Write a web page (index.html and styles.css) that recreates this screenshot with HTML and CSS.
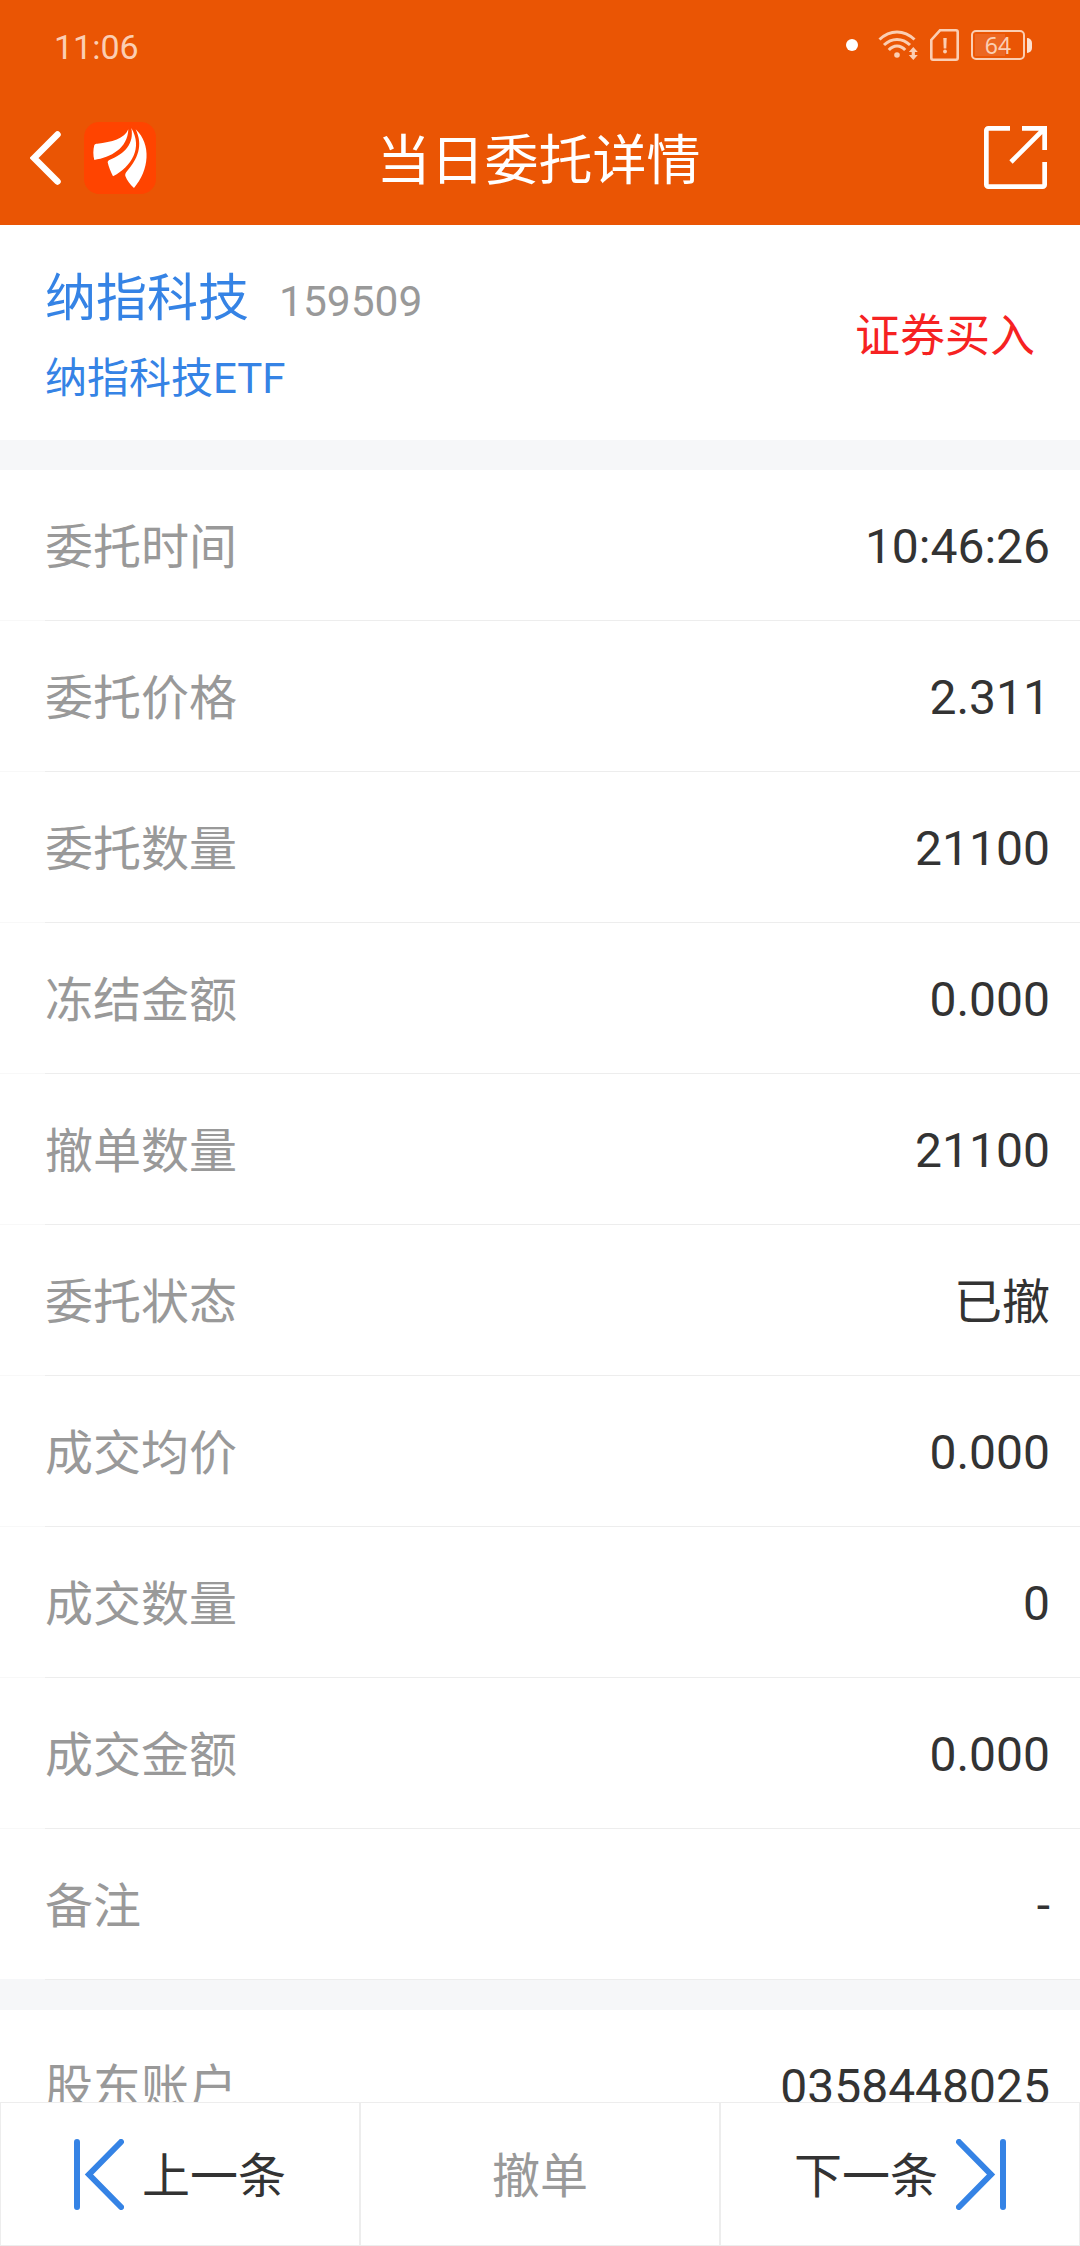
FILE: index.html
```html
<!DOCTYPE html>
<html lang="zh-CN">

<head>
    <meta charset="UTF-8">
    <meta name="viewport" content="width=device-width, initial-scale=1.0">
    <title>当日委托详情</title>
    <link rel="stylesheet" href="styles.css">
</head>

<body>
    <!-- Header section -->
    <header>
        <div class="status-bar">
            <span class="clock">11:06</span>
            <div class="status-icons">
                <span class="dot"></span>
                <svg class="wifi" width="40" height="32" viewBox="0 0 40 32" fill="none" stroke="#fbceb3" stroke-width="3">
                    <path d="M1.5 10.5C12 .4 26 .4 36.500 10.500M6 16C13.500 8.500 24.500 8.500 32 16M10.800 21C15.500 15.500 22.500 15.500 27.200 21" />
                    <circle cx="19" cy="26" r="2.800" fill="#fbceb3" stroke="none" />
                    <path d="M35.300 18l4.500 5h-2.900v3h2.900l-4.500 5-4.500-5h2.900v-3h-2.900z" fill="#fbceb3" stroke="none" />
                </svg>
                <svg class="sim" width="29" height="32" viewBox="0 0 29 32" fill="none" stroke="#fbceb3" stroke-width="2.600">
                    <path d="M10 1.300H26a1.700 1.700 0 0 1 1.700 1.700V29a1.700 1.700 0 0 1-1.700 1.700H3A1.700 1.700 0 0 1 1.300 29V11z" />
                    <path d="M13.300 9h3.400l-.4 10.500h-2.600z" fill="#fbceb3" stroke="none" />
                    <circle cx="15" cy="22.500" r="1.900" fill="#fbceb3" stroke="none" />
                </svg>
                <div class="battery"><span class="battery-level">64</span></div>
            </div>
        </div>
        <div class="title-bar">
            <div class="title-left">
                <svg class="back" width="32" height="54" viewBox="0 0 32 54" fill="none" stroke="#fff" stroke-width="6.500" stroke-linecap="round">
                    <path d="M27.500 3.500L4 27l23.500 23.500" />
                </svg>
                <svg class="logo" width="72" height="72" viewBox="0 0 216 216">
                    <rect width="216" height="216" rx="46" fill="#ff4400" />
                    <g fill="#fff">
                        <path d="M133 22C131 80 80 106 31 114C27 100 27 84 31 69C33 66 36 65 40 65C83 61 122 50 133 22Z" />
                        <path d="M142 18C177 78 143 134 87 163C80 149 74 135 71 121C71 118 73 116 76 114C123 95 151 65 142 18Z" />
                        <path d="M155 22C203 67 196 145 150 198C138 187 129 175 124 162C123 158 124 154 127 150C162 111 178 70 155 22Z" />
                    </g>
                </svg>
            </div>
            <h1>当日委托详情</h1>
            <svg class="share" width="63" height="63" viewBox="0 0 63 63" fill="none" stroke="#fff" stroke-width="4.700">
                <path d="M26 2.350H4.350a2 2 0 0 0-2 2V58.650a2 2 0 0 0 2 2H58.650a2 2 0 0 0 2-2V36M38 2.350H60.650V24M59 4L27 36" />
            </svg>
        </div>
    </header>

    <main>
        <!-- Stock summary -->
        <section class="summary">
            <div>
                <div class="stock">
                    <span class="stock-name">纳指科技</span>
                    <span class="stock-code">159509</span>
                </div>
                <div class="stock-full">纳指科技ETF</div>
            </div>
            <span class="side">证券买入</span>
        </section>

        <!-- Order details -->
        <section class="details">
            <div class="row"><span class="label">委托时间</span><span class="value">10:46:26</span></div>
            <div class="row"><span class="label">委托价格</span><span class="value">2.311</span></div>
            <div class="row"><span class="label">委托数量</span><span class="value">21100</span></div>
            <div class="row"><span class="label">冻结金额</span><span class="value">0.000</span></div>
            <div class="row"><span class="label">撤单数量</span><span class="value">21100</span></div>
            <div class="row"><span class="label">委托状态</span><span class="value status">已撤</span></div>
            <div class="row"><span class="label">成交均价</span><span class="value">0.000</span></div>
            <div class="row"><span class="label">成交数量</span><span class="value">0</span></div>
            <div class="row"><span class="label">成交金额</span><span class="value">0.000</span></div>
            <div class="row last"><span class="label">备注</span><span class="value">-</span></div>
        </section>

        <!-- Account -->
        <section class="details">
            <div class="row"><span class="label">股东账户</span><span class="value">0358448025</span></div>
        </section>
    </main>

    <!-- Bottom buttons -->
    <footer>
        <button>
            <svg width="50" height="71" viewBox="0 0 50 71" fill="none" stroke="#3583e5" stroke-width="6" stroke-linecap="round">
                <path d="M3 3V68M47 3L15 35.500L47 68" />
            </svg>
            <span>上一条</span>
        </button>
        <button class="disabled"><span>撤单</span></button>
        <button>
            <span>下一条</span>
            <svg width="50" height="71" viewBox="0 0 50 71" fill="none" stroke="#3583e5" stroke-width="6" stroke-linecap="round">
                <path d="M47 3V68M3 3L35 35.500L3 68" />
            </svg>
        </button>
    </footer>
</body>

</html>
```

FILE: styles.css
```css
* {
    box-sizing: border-box;
}

body {
    margin: 0;
    height: 2246px;
    display: flex;
    flex-direction: column;
    overflow: hidden;
    background-color: #fff;
    color: #333;
    font-family: Roboto, "Noto Sans CJK SC", sans-serif;
    line-height: 1.2;
}

svg {
    display: block;
    flex: none;
}

header {
    flex: none;
    height: 225px;
    background-color: #ea5504;
    color: #fff;
}

/* Status bar */
.status-bar {
    height: 90px;
    padding: 0 48px 0 54px;
    display: flex;
    align-items: center;
    justify-content: space-between;
}

.clock {
    padding-top: 5px;
    font-size: 34px;
    color: #fbceb3;
}

.status-icons {
    display: flex;
    align-items: center;
}

.dot {
    width: 12px;
    height: 12px;
    margin-right: 20px;
    border-radius: 50%;
    background-color: #fff;
}

.wifi {
    margin-right: 12px;
}

.sim {
    margin-right: 12px;
}

.battery {
    display: flex;
    align-items: center;
}

.battery-level {
    width: 54px;
    height: 30px;
    border: 2px solid #fbceb3;
    border-radius: 5px;
    background: linear-gradient(#ec6621, #ec6621) 2px 2px / 30px 22px no-repeat;
    font-family: "Noto Sans", sans-serif;
    font-size: 23px;
    line-height: 26px;
    text-align: center;
    color: #fbceb3;
}

.battery::after {
    content: "";
    width: 5px;
    height: 15px;
    margin-left: 2px;
    border-radius: 0 5px 5px 0;
    background-color: #fde0cf;
}

/* Title bar */
.title-bar {
    height: 135px;
    padding: 0 33px 0 30px;
    display: grid;
    grid-template-columns: 1fr auto 1fr;
    align-items: center;
}

.title-left {
    display: flex;
    align-items: center;
    gap: 22px;
}

h1 {
    margin: 0;
    padding-top: 10px;
    font-size: 54px;
    font-weight: normal;
}

.share {
    justify-self: end;
}

main {
    flex: 1;
    min-height: 0;
    overflow: hidden;
}

/* Stock summary */
.summary {
    height: 245px;
    padding: 34px 45px 0 45px;
    border-bottom: 30px solid #f6f7f9;
    display: flex;
    justify-content: space-between;
}

.stock {
    display: flex;
    align-items: baseline;
    gap: 30px;
    height: 80px;
    line-height: 80px;
}

.stock-name {
    font-size: 51px;
    color: #3583e5;
}

.stock-code {
    font-size: 42.5px;
    color: #999;
}

.stock-full {
    line-height: 79px;
    font-size: 42px;
    color: #3583e5;
}

.side {
    line-height: 155px;
    font-size: 45px;
    color: #f62222;
}

/* Detail rows */
.row {
    height: 151px;
    padding: 2px 30px 0 45px;
    display: flex;
    align-items: center;
    justify-content: space-between;
    background: linear-gradient(to right, #f8f8f8 45px, #ededed 45px) bottom / 100% 1px no-repeat;
    font-size: 48px;
}

.row.last {
    background-image: linear-gradient(to right, #f6f7f9 45px, #ededed 45px);
}

.label {
    padding-top: 2px;
    color: #999;
}

.status {
    padding-top: 2px;
}

.details + .details {
    border-top: 30px solid #f6f7f9;
}

/* Bottom buttons */
footer {
    flex: none;
    height: 144px;
    display: flex;
}

button {
    flex: 1;
    border: 1px solid #ededed;
    padding: 0;
    display: flex;
    align-items: center;
    justify-content: center;
    gap: 18px;
    background-color: #fff;
    color: #333;
    font-family: inherit;
    font-size: 48px;
    line-height: 1.2;
}

button span {
    padding-top: 5px;
}

.disabled {
    color: #999;
}
```
